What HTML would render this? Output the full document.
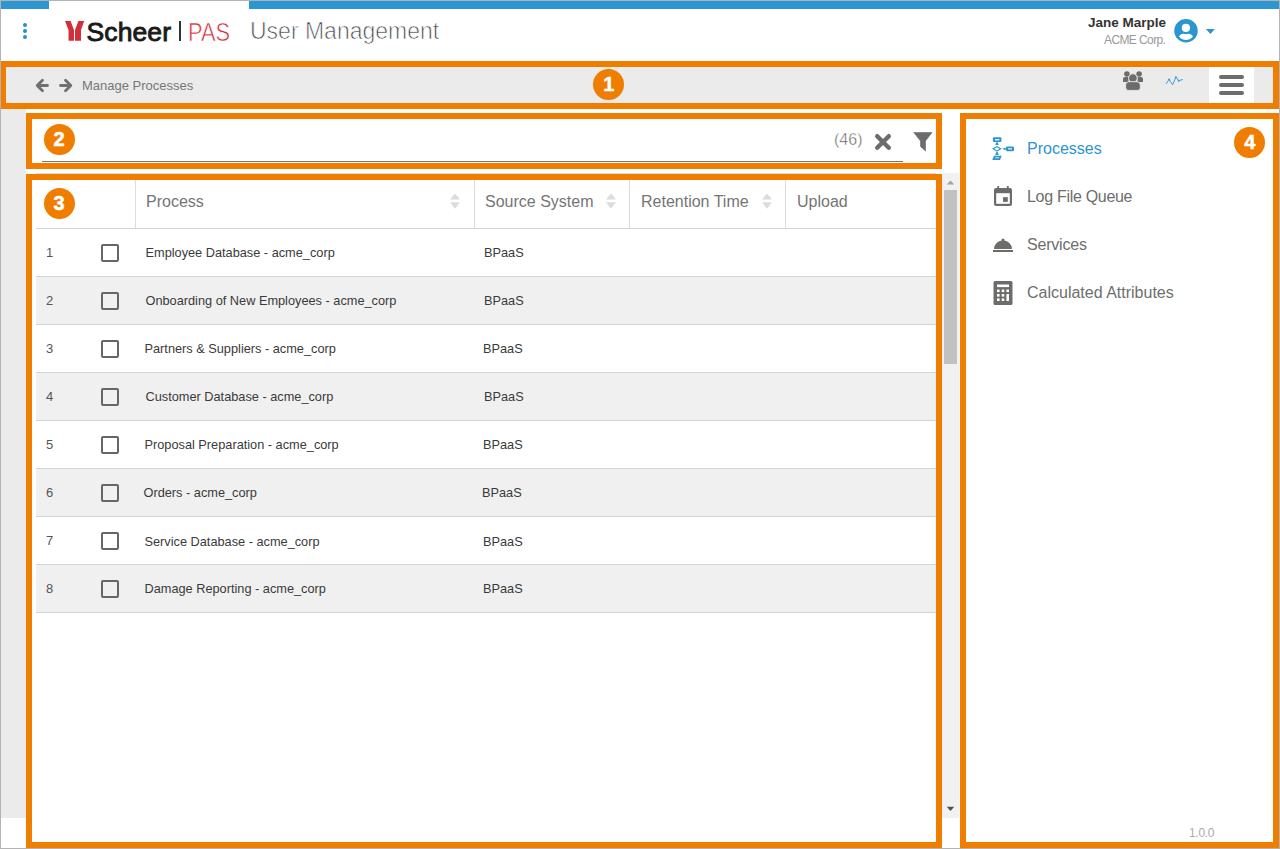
<!DOCTYPE html>
<html><head><meta charset="utf-8">
<style>
*{box-sizing:border-box;margin:0;padding:0}
html,body{width:1280px;height:849px;overflow:hidden;background:#fff;font-family:"Liberation Sans",sans-serif;position:relative}
.a{position:absolute}
.ob{position:absolute;border:6px solid #ef7d00}
.badge{position:absolute;width:31px;height:31px;border-radius:50%;background:#ef7d00;color:#fff;font-family:"Liberation Sans",sans-serif;font-weight:bold;font-size:20px;line-height:31px;text-align:center;-webkit-text-stroke:0.5px #fff}
.t{position:absolute;white-space:nowrap;line-height:1}
.hdr{font-size:16px;color:#757575}
.cell{font-size:12.75px;color:#3a3a3a}
.num{font-size:13px;color:#555}
.cb{position:absolute;left:101px;width:18px;height:18px;border:2px solid #666;border-radius:2px;background:transparent}
.rowline{position:absolute;left:36px;width:900px;height:1px;background:#d4d4d4}
.stripe{position:absolute;left:36px;width:900px;height:47px;background:#f0f0f0}
.side{font-size:16px;color:#6e6e6e}
</style></head><body>
<!-- top blue bar -->
<div class="a" style="left:1px;top:1px;width:48px;height:8px;background:#2b96cf"></div>
<div class="a" style="left:249px;top:1px;width:1031px;height:8px;background:#2b96cf"></div>

<!-- kebab -->
<div class="a" style="left:23px;top:23px;width:4px;height:4px;border-radius:50%;background:#2191d2"></div>
<div class="a" style="left:23px;top:29px;width:4px;height:4px;border-radius:50%;background:#2191d2"></div>
<div class="a" style="left:23px;top:35px;width:4px;height:4px;border-radius:50%;background:#2191d2"></div>

<!-- logo -->
<svg class="a" style="left:60px;top:16px" width="30" height="30" viewBox="60 16 30 30">
<polygon fill="#d1303a" points="65,21 70.6,21 74,30 74,40.8 68.5,40.8 68.5,30"/>
<polygon fill="#d1303a" points="78.4,21 84.2,21 81,30 81,40.8 75,40.8 75,30"/>
</svg>
<div class="t" style="left:86.5px;top:19px;font-size:26.5px;color:#1a1a1a;-webkit-text-stroke:0.9px #1a1a1a;letter-spacing:0.1px">Scheer</div>
<div class="a" style="left:179px;top:21px;width:2px;height:20px;background:#333"></div>
<div class="t" style="left:188px;top:18.5px;font-size:26px;color:#d1303a;-webkit-text-stroke:0.6px #fff;transform:scaleX(0.84);transform-origin:0 0">PAS</div>
<div class="t" style="left:250px;top:19.7px;font-size:23px;color:#4a4a4a;-webkit-text-stroke:0.7px #fff">User Management</div>

<!-- user -->
<div class="t" style="left:1088px;top:16.4px;font-size:13.5px;font-weight:bold;color:#333">Jane Marple</div>
<div class="t" style="left:1104px;top:33.8px;font-size:12px;color:#999;letter-spacing:-0.6px">ACME Corp.</div>
<svg class="a" style="left:1170px;top:15px" width="50" height="30" viewBox="1170 15 50 30">
<circle cx="1186" cy="30.8" r="11.75" fill="#2a96cf"/>
<circle cx="1185.9" cy="27.9" r="4.1" fill="#fff"/>
<path d="M1179 36.6 Q1180.5 33.7 1184 33.8 L1186 34.3 L1188 33.8 Q1191.5 33.7 1192.9 36.6 Q1190.5 40 1186 40 Q1181.5 40 1179 36.6Z" fill="#fff"/>
<polygon points="1205.9,29.1 1214.9,29.1 1210.4,33.9" fill="#2a96cf"/>
</svg>

<!-- toolbar -->
<div class="a" style="left:1px;top:61px;width:1278px;height:48px;background:#ebebeb"></div>
<div class="a" style="left:1209px;top:67px;width:45px;height:36px;background:#fff"></div>


<!-- toolbar contents -->
<svg class="a" style="left:35px;top:78px" width="14" height="15" viewBox="0 0 14 15"><path d="M12.5 7.5H2.5M7.5 2.2L2.2 7.5L7.5 12.8" fill="none" stroke="#707070" stroke-width="2.8" stroke-linecap="round" stroke-linejoin="round"/></svg>
<svg class="a" style="left:59px;top:78px" width="14" height="15" viewBox="0 0 14 15"><path d="M1.5 7.5H11.5M6.5 2.2L11.8 7.5L6.5 12.8" fill="none" stroke="#707070" stroke-width="2.8" stroke-linecap="round" stroke-linejoin="round"/></svg>
<div class="t" style="left:82px;top:79px;font-size:13px;color:#777">Manage Processes</div>
<!-- group icon -->
<svg class="a" style="left:1120px;top:70px" width="26" height="22" viewBox="1120 70 26 22">
<circle cx="1126.9" cy="74" r="2.8" fill="#6c6d6a"/>
<circle cx="1139.1" cy="74" r="2.8" fill="#6c6d6a"/>
<path d="M1123 82 V79 Q1123 77 1125 77 H1128.5 V82 Z" fill="#6c6d6a"/>
<path d="M1143 82 V79 Q1143 77 1141 77 H1137.5 V82 Z" fill="#6c6d6a"/>
<rect x="1123" y="80" width="3" height="2" rx="1" fill="#6c6d6a"/>
<circle cx="1132.9" cy="78.1" r="4.3" fill="#6c6d6a" stroke="#ebebeb" stroke-width="0.9"/>
<path d="M1125.6 90.4 V85 Q1125.6 81.7 1128.6 81.7 H1137 Q1140.3 81.7 1140.3 85 V88 Q1140.3 90.4 1137.8 90.4 H1128 Q1125.6 90.4 1125.6 88Z" fill="#6c6d6a" stroke="#ebebeb" stroke-width="0.9"/>
</svg>
<svg class="a" style="left:1162px;top:72px" width="24" height="18" viewBox="1162 72 24 18"><polyline points="1166.2,83.6 1169.1,79.4 1172.6,84.9 1175.9,77.2 1178.7,80.7 1182.4,79.6" fill="none" stroke="#3a9ad0" stroke-width="0.95" stroke-linejoin="round" stroke-linecap="round"/><circle cx="1169.1" cy="79.4" r="1.0" fill="#3a9ad0"/><circle cx="1175.9" cy="77.2" r="1.0" fill="#3a9ad0"/><circle cx="1178.7" cy="80.7" r="1.0" fill="#3a9ad0"/></svg>
<div class="a" style="left:1219px;top:75px;width:25px;height:4px;border-radius:2px;background:#6c6d6a"></div>
<div class="a" style="left:1219px;top:83px;width:25px;height:4px;border-radius:2px;background:#6c6d6a"></div>
<div class="a" style="left:1219px;top:91px;width:25px;height:4px;border-radius:2px;background:#6c6d6a"></div>

<!-- filter bar -->
<div class="a" style="left:42px;top:161px;width:861px;height:1px;background:#777"></div>
<div class="t" style="left:834px;top:132px;font-size:16px;color:#555;-webkit-text-stroke:0.45px #fff">(46)</div>
<svg class="a" style="left:874px;top:133px" width="18" height="18" viewBox="0 0 18 18"><path d="M3.2 3.2L14.8 14.8M14.8 3.2L3.2 14.8" stroke="#6c6d6a" stroke-width="4.4" stroke-linecap="round"/></svg>
<svg class="a" style="left:913px;top:132px" width="20" height="20" viewBox="913 132 20 20"><path d="M913.7 132.5 H932 L925.5 141 V151 L920.5 146.5 V141Z" fill="#6c6d6a" stroke="#6c6d6a" stroke-width="0.6" stroke-linejoin="round"/></svg>

<!-- left gray strip -->
<div class="a" style="left:1px;top:109px;width:25px;height:709px;background:#ebebeb"></div>


<!-- table -->
<div class="a" style="left:36px;top:173px;width:900px;height:1px;background:#dcdcdc"></div>
<div class="a" style="left:135px;top:173px;width:1px;height:55px;background:#dcdcdc"></div>
<div class="a" style="left:474px;top:173px;width:1px;height:55px;background:#dcdcdc"></div>
<div class="a" style="left:629px;top:173px;width:1px;height:55px;background:#dcdcdc"></div>
<div class="a" style="left:785px;top:173px;width:1px;height:55px;background:#dcdcdc"></div>
<div class="rowline" style="top:228px"></div>
<div class="rowline" style="top:276px"></div>
<div class="t num" style="left:46px;top:246.4px">1</div>
<div class="cb" style="top:244px"></div>
<div class="t cell" style="left:145.5px;top:247.2px">Employee Database - acme_corp</div>
<div class="t cell" style="left:484.0px;top:247.2px">BPaaS</div>
<div class="stripe" style="top:277px"></div>
<div class="rowline" style="top:324px"></div>
<div class="t num" style="left:46px;top:294.4px">2</div>
<div class="cb" style="top:292px"></div>
<div class="t cell" style="left:145.5px;top:295.2px">Onboarding of New Employees - acme_corp</div>
<div class="t cell" style="left:484.0px;top:295.2px">BPaaS</div>
<div class="rowline" style="top:372px"></div>
<div class="t num" style="left:46px;top:342.4px">3</div>
<div class="cb" style="top:340px"></div>
<div class="t cell" style="left:144.5px;top:343.2px">Partners &amp; Suppliers - acme_corp</div>
<div class="t cell" style="left:483.0px;top:343.2px">BPaaS</div>
<div class="stripe" style="top:373px"></div>
<div class="rowline" style="top:420px"></div>
<div class="t num" style="left:46px;top:390.4px">4</div>
<div class="cb" style="top:388px"></div>
<div class="t cell" style="left:145.5px;top:391.2px">Customer Database - acme_corp</div>
<div class="t cell" style="left:484.0px;top:391.2px">BPaaS</div>
<div class="rowline" style="top:468px"></div>
<div class="t num" style="left:46px;top:438.4px">5</div>
<div class="cb" style="top:436px"></div>
<div class="t cell" style="left:144.5px;top:439.2px">Proposal Preparation - acme_corp</div>
<div class="t cell" style="left:483.0px;top:439.2px">BPaaS</div>
<div class="stripe" style="top:469px"></div>
<div class="rowline" style="top:516px"></div>
<div class="t num" style="left:46px;top:486.4px">6</div>
<div class="cb" style="top:484px"></div>
<div class="t cell" style="left:143.5px;top:487.2px">Orders - acme_corp</div>
<div class="t cell" style="left:482.0px;top:487.2px">BPaaS</div>
<div class="rowline" style="top:564px"></div>
<div class="t num" style="left:46px;top:534.4px">7</div>
<div class="cb" style="top:532px"></div>
<div class="t cell" style="left:144.5px;top:536.2px">Service Database - acme_corp</div>
<div class="t cell" style="left:483.0px;top:536.2px">BPaaS</div>
<div class="stripe" style="top:565px"></div>
<div class="rowline" style="top:612px"></div>
<div class="t num" style="left:46px;top:582.4px">8</div>
<div class="cb" style="top:580px"></div>
<div class="t cell" style="left:144.5px;top:583.2px">Damage Reporting - acme_corp</div>
<div class="t cell" style="left:483.0px;top:583.2px">BPaaS</div>
<div class="t hdr" style="left:146px;top:193.6px">Process</div>
<div class="t hdr" style="left:485px;top:193.6px">Source System</div>
<div class="t hdr" style="left:641px;top:193.6px">Retention Time</div>
<div class="t hdr" style="left:797px;top:193.6px">Upload</div>
<svg class="a" style="left:449px;top:192px" width="12" height="18" viewBox="0 0 12 18"><polygon points="1,7.5 11,7.5 6,1.5" fill="#dcdcdc"/><polygon points="1,10.2 11,10.2 6,16.8" fill="#dcdcdc"/></svg>
<svg class="a" style="left:605px;top:192px" width="12" height="18" viewBox="0 0 12 18"><polygon points="1,7.5 11,7.5 6,1.5" fill="#dcdcdc"/><polygon points="1,10.2 11,10.2 6,16.8" fill="#dcdcdc"/></svg>
<svg class="a" style="left:761px;top:192px" width="12" height="18" viewBox="0 0 12 18"><polygon points="1,7.5 11,7.5 6,1.5" fill="#dcdcdc"/><polygon points="1,10.2 11,10.2 6,16.8" fill="#dcdcdc"/></svg>
<div class="a" style="left:942px;top:173px;width:17px;height:645px;background:#f1f1f1"></div>
<svg class="a" style="left:942px;top:177px" width="17" height="10" viewBox="0 0 17 10"><polygon points="4.8,7.5 12.2,7.5 8.5,3.5" fill="#a3a3a3"/></svg>
<div class="a" style="left:944px;top:190px;width:13px;height:174px;background:#c1c1c1"></div>
<svg class="a" style="left:942px;top:804px" width="17" height="10" viewBox="0 0 17 10"><polygon points="4.8,2.7 12.2,2.7 8.5,6.9" fill="#505050"/></svg>

<!-- sidebar -->
<div class="t side" style="left:1027px;top:140.5px;color:#2a96cf;letter-spacing:0px">Processes</div>
<div class="t side" style="left:1027px;top:189.4px;color:#6e6e6e;letter-spacing:-0.3px">Log File Queue</div>
<div class="t side" style="left:1027px;top:236.5px;color:#6e6e6e;letter-spacing:-0.2px">Services</div>
<div class="t side" style="left:1027px;top:284.5px;color:#6e6e6e;letter-spacing:0px">Calculated Attributes</div>
<div class="t" style="left:1189px;top:827.3px;font-size:12px;color:#aaa;letter-spacing:-0.3px">1.0.0</div>
<svg class="a" style="left:990px;top:134px" width="28" height="28" viewBox="990 134 28 28">
<g fill="#2a96cf">
<rect x="992.9" y="137.3" width="8.5" height="4.6" rx="1"/>
<path d="M992 148.85 L996.9 145.9 L1001.8 148.85 L996.9 151.8Z"/>
<rect x="1006" y="146.4" width="8" height="4.9" rx="1.3"/>
<path d="M992.3 159.9 L994 155.8 L1001.7 155.8 L1000 159.9Z"/>
<path d="M996.4 142.2 H997.6 L998.8 145 H995.2Z"/>
<path d="M996.4 152 H997.6 L998.8 155 H995.2Z"/>
<path d="M1002.4 148.85 L1005.4 147.4 V150.3Z"/>
<rect x="1004.8" y="148.4" width="1.5" height="0.9"/>
</g>
<g fill="#fff">
<rect x="995" y="139.1" width="4.3" height="1.3"/>
<path d="M994.3 148.85 L996.9 147.3 L999.5 148.85 L996.9 150.4Z"/>
<rect x="1008" y="148.3" width="4" height="1.1"/>
<path d="M994.9 158.3 L995.5 157.3 L999.3 157.3 L998.8 158.3Z" fill-opacity="0.8"/>
</g>
</svg>
<svg class="a" style="left:990px;top:182px" width="26" height="28" viewBox="990 182 26 28">
<path d="M994 190 Q994 188 996 188 H1010 Q1012 188 1012 190 V204 Q1012 206 1010 206 H996 Q994 206 994 204Z" fill="#6c6d6a"/>
<rect x="996.2" y="193.2" width="13.6" height="10.6" fill="#fff"/>
<rect x="997.3" y="186" width="1.8" height="3" fill="#6c6d6a"/>
<rect x="1006.9" y="186" width="1.8" height="3" fill="#6c6d6a"/>
<rect x="1003" y="197.2" width="4.8" height="4.7" fill="#6c6d6a"/>
</svg>
<svg class="a" style="left:990px;top:234px" width="26" height="22" viewBox="990 234 26 22">
<circle cx="1003" cy="240" r="1.6" fill="#6c6d6a"/>
<path d="M994 249 A9 8.5 0 0 1 1012 249Z" fill="#6c6d6a"/>
<rect x="993" y="250" width="20" height="2" fill="#6c6d6a"/>
</svg>
<svg class="a" style="left:990px;top:278px" width="26" height="30" viewBox="990 278 26 30">
<rect x="993.5" y="281" width="19" height="24" rx="1.6" fill="#6c6d6a"/>
<rect x="997" y="284.5" width="12" height="2.6" fill="#fff"/>
<rect x="997" y="289.5" width="2.6" height="2.6" fill="#fff"/>
<rect x="1001.7" y="289.5" width="2.6" height="2.6" fill="#fff"/>
<rect x="1006.4" y="289.5" width="2.6" height="2.6" fill="#fff"/>
<rect x="997" y="294" width="2.6" height="2.6" fill="#fff"/>
<rect x="1001.7" y="294" width="2.6" height="2.6" fill="#fff"/>
<rect x="1006.4" y="294" width="2.6" height="7" fill="#fff"/>
<rect x="997" y="298.4" width="2.6" height="2.6" fill="#fff"/>
<rect x="1001.7" y="298.4" width="2.6" height="2.6" fill="#fff"/>
</svg>

<!-- orange boxes -->
<div class="ob" style="left:0px;top:61px;width:1279px;height:48px"></div>
<div class="ob" style="left:26px;top:113px;width:916px;height:56px"></div>
<div class="ob" style="left:26px;top:174px;width:916px;height:674px"></div>
<div class="ob" style="left:960px;top:113px;width:319px;height:735px"></div>


<!-- badges -->
<div class="badge" style="left:593.3px;top:69.3px">1</div>
<div class="badge" style="left:43.5px;top:124.3px">2</div>
<div class="badge" style="left:43.5px;top:188.3px">3</div>
<div class="badge" style="left:1234.2px;top:126.6px">4</div>

<!-- frame -->
<div class="a" style="left:0;top:0;width:1280px;height:849px;border:1px solid #b3b3b3"></div>
</body></html>
